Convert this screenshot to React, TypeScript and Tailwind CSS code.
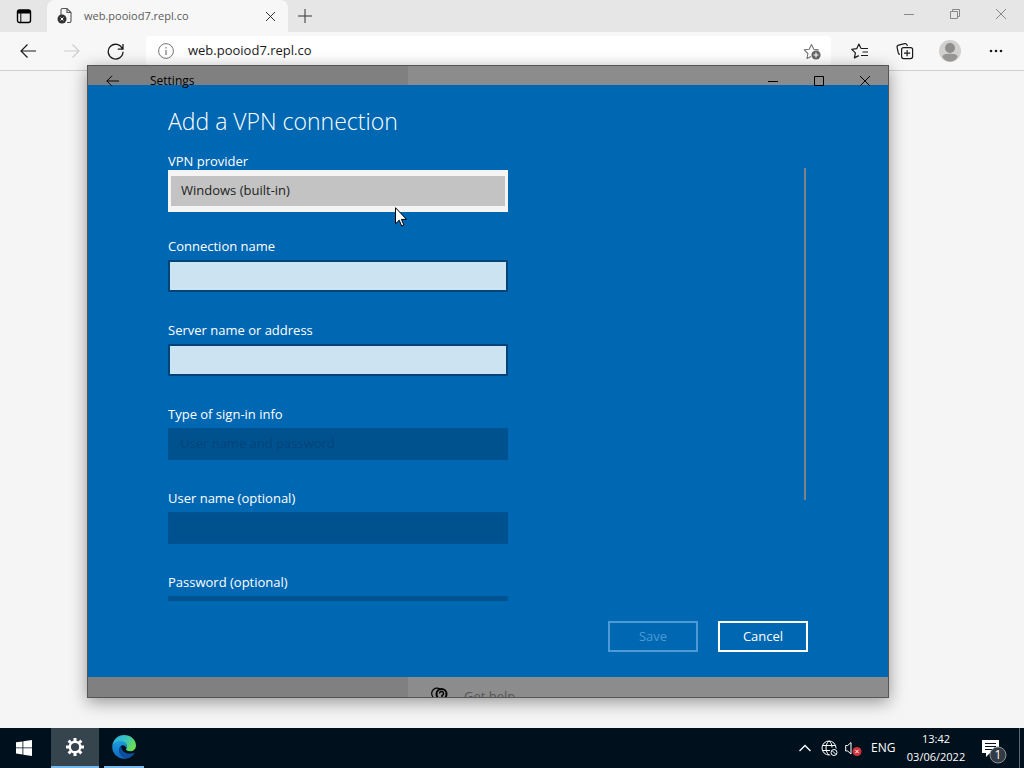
import { useState } from "react";

const edgeIcon = "fill-none stroke-current";

function CloseIcon({ className }: { className: string }) {
	return (
		<svg viewBox="0 0 10 10" className={className} fill="none" stroke="currentColor">
			<path d="M0 0L10 10M10 0L0 10" />
		</svg>
	);
}

function BackIcon({ className }: { className: string }) {
	return (
		<svg viewBox="0 0 16 14" className={className} fill="none" stroke="currentColor" strokeWidth="1.2">
			<path d="M16 7H1M7.5 .5L1 7l6.5 6.5" />
		</svg>
	);
}

function TabStrip() {
	return (
		<div className="flex h-8 bg-[#e6e6e6] text-[#1b1b1b]">
			<button type="button" aria-label="Tab actions" className="flex w-[47px] items-center justify-center">
				<svg viewBox="0 0 16 16" className="h-4 w-4">
					<rect x="1.5" y="2" width="13" height="12.5" rx="2" fill="none" stroke="#000" strokeWidth="1.4" />
					<path d="M1.5 5.5V4a2 2 0 0 1 2-2h9a2 2 0 0 1 2 2v1.5z" fill="#000" />
					<path d="M4.8 5v9" stroke="#000" strokeWidth="1" />
				</svg>
			</button>
			<div className="flex w-[241px] items-center rounded-t-lg bg-[#f7f7f7] pl-[10px] pr-[9px]">
				<svg viewBox="0 0 16 18" className="h-[18px] w-4">
					<path
						d="M4 8V3a1.500 1.500 0 0 1 1.500-1.500H10L14 5.500V14a1.500 1.500 0 0 1-1.500 1.500H10M10 1.500v4h4"
						fill="none"
						stroke="#555"
						strokeWidth="1.1"
					/>
					<circle cx="5" cy="12" r="4.5" fill="#333" />
					<path d="M3.5 10.500l3 3m0-3l-3 3" stroke="#fff" strokeWidth="1" />
				</svg>
				<span className="ml-[11px] flex-1 text-[11px] text-[#5a5a5a]">web.pooiod7.repl.co</span>
				<button type="button" aria-label="Close tab" className="p-1">
					<CloseIcon className="h-[9px] w-[9px]" />
				</button>
			</div>
			<button type="button" aria-label="New tab" className="flex w-[34px] items-center justify-center">
				<svg viewBox="0 0 14 14" className="h-[14px] w-[14px] fill-none stroke-[#333]">
					<path d="M7 0v14M0 7h14" />
				</svg>
			</button>
			<div className="ml-auto flex items-center pb-1 text-[#888]">
				<button type="button" aria-label="Minimize" className="flex w-[46px] justify-center">
					<svg viewBox="0 0 10 10" className="h-[10px] w-[10px] fill-none stroke-current">
						<path d="M0 5.500h10" />
					</svg>
				</button>
				<button type="button" aria-label="Restore" className="flex w-[46px] justify-center">
					<svg viewBox="0 0 10 10" className="h-[10px] w-[10px] fill-none stroke-current">
						<path d="M.5 2.500h7v7h-7zM2.500 2.500v-2h7v7h-2" />
					</svg>
				</button>
				<button type="button" aria-label="Close" className="flex w-[46px] justify-center">
					<CloseIcon className="h-[10px] w-[10px]" />
				</button>
			</div>
		</div>
	);
}

function Toolbar() {
	const [url, setUrl] = useState("web.pooiod7.repl.co");

	return (
		<div className="flex h-[39px] items-center border-b border-[#d0d0d0] bg-[#f7f7f7] pl-5 pr-[21px] text-[#1b1b1b]">
			<button type="button" aria-label="Back">
				<BackIcon className="h-[14px] w-4" />
			</button>
			<button type="button" aria-label="Forward" disabled className="ml-7 text-[#cdcdcd]">
				<BackIcon className="h-[14px] w-4 rotate-180" />
			</button>
			<button type="button" aria-label="Refresh" className="ml-[27px]">
				<svg viewBox="0 0 17 17" className={`h-[17px] w-[17px] ${edgeIcon}`} strokeWidth="1.3">
					<path d="M15.500 6A7.400 7.400 0 1 0 16 8.800M16 1v5.200h-5.200" />
				</svg>
			</button>
			<div className="ml-[22px] flex h-[30px] flex-1 items-center rounded bg-white pl-3 pr-[9px]">
				<svg viewBox="0 0 16 16" className="h-4 w-4 fill-none stroke-[#767676]">
					<circle cx="8" cy="8" r="7.4" />
					<path d="M8 7v5M8 4v1.500" strokeWidth="1.2" />
				</svg>
				<input
					type="text"
					aria-label="Address"
					value={url}
					onChange={(e) => setUrl(e.target.value)}
					className="ml-[14px] min-w-0 flex-1 text-[13px] outline-none"
				/>
				<button type="button" aria-label="Add to favorites" className="text-[#767676]">
					<svg viewBox="0 0 19 18" className={`h-[18px] w-[19px] ${edgeIcon}`} strokeWidth="1.1">
						<path d="M8 14.500L4 16.500l.9-5L1.200 7.900l5-.7L8.500 2.500l2.300 4.700 5 .7" strokeLinejoin="round" />
						<circle cx="13" cy="13" r="4.6" fill="#666" stroke="none" />
						<path d="M13 10.500v5M10.500 13h5" stroke="#fff" />
					</svg>
				</button>
			</div>
			<button type="button" aria-label="Favorites" className="ml-5">
				<svg viewBox="0 0 18 18" className={`h-[18px] w-[18px] ${edgeIcon}`} strokeWidth="1.2">
					<path
						d="M10 6.500L7.900 2 5.700 6.700l-5 .7 3.700 3.500-1 5 4.400-2.300M10 6.500h7M11.500 10H17M10 13.500h7"
						strokeLinejoin="round"
					/>
				</svg>
			</button>
			<button type="button" aria-label="Collections" className="ml-[27px]">
				<svg viewBox="0 0 18 18" className={`h-[18px] w-[18px] ${edgeIcon}`} strokeWidth="1.2">
					<path d="M4 12.500a2 2 0 0 1-1.700-1.500L1.100 5.500a2 2 0 0 1 1.500-2.300l6.200-1.500a2 2 0 0 1 2.400 1.500l.2.8" />
					<rect x="5.6" y="5.6" width="11" height="11" rx="2" />
					<path d="M11.100 8v6.200M8 11.100h6.200" />
				</svg>
			</button>
			<button type="button" aria-label="Profile" className="ml-[25px]">
				<svg viewBox="0 0 22 22" className="h-[22px] w-[22px]">
					<circle cx="11" cy="11" r="11" fill="#d2d0ce" />
					<circle cx="11" cy="8" r="5" fill="#8f8d8b" />
					<path d="M3.500 17c0-2.500 3-3.200 7.500-3.200s7.500.7 7.500 3.200c-1.500 2.800-4 4.500-7.500 4.500s-6-1.700-7.500-4.500z" fill="#979593" />
				</svg>
			</button>
			<button type="button" aria-label="Settings and more" className="ml-7">
				<svg viewBox="0 0 14 4" className="h-1 w-[14px] fill-current">
					<circle cx="2" cy="2" r="1.3" />
					<circle cx="7" cy="2" r="1.3" />
					<circle cx="12" cy="2" r="1.3" />
				</svg>
			</button>
		</div>
	);
}

type TextRowProps = {
	id: string;
	label: string;
	type?: string;
	disabled?: boolean;
};

function TextRow({ id, label, type = "text", disabled = false }: TextRowProps) {
	return (
		<div className="flex h-[84px] shrink-0 flex-col gap-1">
			<label htmlFor={id} className="text-[13px] leading-5">
				{label}
			</label>
			<input
				id={id}
				type={type}
				disabled={disabled}
				className="h-8 border-2 border-[#004578] bg-[#cce3f1] px-2 text-black outline-none disabled:border-[#005291] disabled:bg-[#00528f]"
			/>
		</div>
	);
}

function VpnDialog() {
	return (
		<div
			role="dialog"
			aria-label="Add a VPN connection"
			className="absolute inset-x-0 top-[19px] bottom-5 flex flex-col bg-[#0067b3] px-20 pt-5 pb-[25px] text-white"
		>
			<h1 className="mb-[15px] text-[23px] leading-8 font-light">Add a VPN connection</h1>
			<div className="flex min-h-0 flex-1 justify-between overflow-hidden pr-[2px]">
				<form className="flex w-[340px] flex-col">
					<div className="flex h-[84px] shrink-0 flex-col">
						<label htmlFor="provider" className="text-[13px] leading-[18px]">
							VPN provider
						</label>
						<select
							id="provider"
							className="h-[42px] appearance-none border-x-[3px] border-y-[6px] border-[#f4f4f4] bg-[#c3c3c3] px-[10px] text-[13px] text-[#222] outline-none"
						>
							<option>Windows (built-in)</option>
						</select>
					</div>
					<TextRow id="connection" label="Connection name" />
					<TextRow id="server" label="Server name or address" />
					<div className="flex h-[84px] shrink-0 flex-col gap-1">
						<label htmlFor="signin" className="text-[13px] leading-5">
							Type of sign-in info
						</label>
						<select
							id="signin"
							disabled
							className="h-8 appearance-none bg-[#00528f] px-3 text-[13px] text-[#00447b] opacity-100"
						>
							<option>User name and password</option>
						</select>
					</div>
					<TextRow id="user" label="User name (optional)" disabled />
					<TextRow id="password" label="Password (optional)" type="password" disabled />
				</form>
				<div className="mt-4 h-[332px] w-[2px] bg-[#7a8289]" />
			</div>
			<div className="mt-5 flex justify-end gap-5 text-[13px]">
				<button type="button" disabled className="h-[31px] w-[90px] border-2 border-[#4d9bd6] text-[#4d9bd6]">
					Save
				</button>
				<button type="button" className="h-[31px] w-[90px] border-2 border-white">
					Cancel
				</button>
			</div>
		</div>
	);
}

function SettingsWindow() {
	return (
		<div className="absolute top-[65px] right-[135px] bottom-[30px] left-[87px] overflow-hidden border border-[#555] bg-[#8c8c8c] shadow-[0_4px_16px_rgba(0,0,0,0.4)]">
			<div className="flex h-full">
				<div className="w-80 bg-[#808080]" />
				<div className="flex flex-1 items-end pl-[22px]">
					<div className="flex h-4 items-start gap-4 overflow-hidden text-[#555]">
						<svg viewBox="0 0 18 18" className="mt-1 h-[18px] w-[18px] fill-none stroke-black">
							<path d="M3 12a5 5 0 1 1 8-7" strokeWidth="1.2" />
							<circle cx="11.5" cy="9" r="5" strokeWidth="2" />
							<path d="M9.500 8.500a2 2 0 1 1 2.500 2v1.500" strokeWidth="1.5" />
						</svg>
						<span className="mt-[5px] text-[13px] leading-5">Get help</span>
					</div>
				</div>
			</div>
			<VpnDialog />
			{/* title bar stays above the dialog */}
			<div className="absolute inset-x-0 top-0 flex h-[30px] items-center text-black">
				<button type="button" aria-label="Go back" className="flex w-12 items-center justify-center">
					<BackIcon className="h-3 w-[13px]" />
				</button>
				<span className="ml-[14px] text-[12px]">Settings</span>
				<button type="button" aria-label="Minimize window" className="ml-auto flex w-[46px] justify-center">
					<svg viewBox="0 0 10 10" className="h-[10px] w-[10px] fill-none stroke-current">
						<path d="M0 5.500h10" />
					</svg>
				</button>
				<button type="button" aria-label="Maximize window" className="flex w-[46px] justify-center">
					<svg viewBox="0 0 10 10" className="h-[10px] w-[10px] fill-none stroke-current">
						<path d="M.5 .5h9v9h-9z" />
					</svg>
				</button>
				<button type="button" aria-label="Close window" className="flex w-[46px] justify-center">
					<CloseIcon className="h-[10px] w-[10px]" />
				</button>
			</div>
		</div>
	);
}

function EdgeLogo() {
	return (
		<svg viewBox="0 0 24 24" className="h-6 w-6">
			<defs>
				<linearGradient id="edge-top" x1="0" y1="0" x2="1" y2=".5">
					<stop offset="0" stopColor="#2aa8e0" />
					<stop offset=".5" stopColor="#35c1c8" />
					<stop offset="1" stopColor="#6bdc54" />
				</linearGradient>
				<linearGradient id="edge-left" x1="0" y1="0" x2="0" y2="1">
					<stop offset="0" stopColor="#1b9de2" />
					<stop offset="1" stopColor="#1164b8" />
				</linearGradient>
			</defs>
			<path
				d="M.3 11C1 4.500 6 0 12 0c7 0 12 5 12 10.500 0 3.800-2.800 5.800-6 5.800-2.700 0-4-1-4-1.700 0-.8 1-1.200 1-3.100 0-2.600-2.600-4.500-6-4.500-3.900 0-7 1.500-8.700 4z"
				fill="url(#edge-top)"
			/>
			<path
				d="M.2 12C.6 8.500 4 6 8.500 6c4 0 6.500 2.400 6.500 5.300 0 .8-.2 1.400-.5 1.900C13.600 11 12 10 10.500 10.300 7 11 6.500 16 9 19.500c1.500 2 3.800 3.500 6 4A12 12 0 0 1 .2 12z"
				fill="url(#edge-left)"
			/>
			<path
				d="M9.300 11C6 13 6.500 18 9.500 21c2 2 4.500 2.700 6 2.400 3-.8 5.500-2.800 6.900-5.200.2-.4-.2-.7-.6-.5-1.300.6-2.600.9-4 .9-5 0-9-3.200-8.500-7.600z"
				fill="#0d4f9e"
			/>
		</svg>
	);
}

function Taskbar() {
	return (
		<div className="flex h-10 shrink-0 bg-[#00101c] text-[12px] text-white">
			<button type="button" aria-label="Start" className="flex w-[51px] items-center justify-center pr-[3px]">
				<svg viewBox="0 0 16 16" className="h-4 w-4 fill-white">
					<path d="M0 2.300L6.500 1.400v6.100H0zM7.300 1.300L16 0v7.500H7.300zM0 8.300h6.500v6.200L0 13.600zM7.300 8.300H16V16l-8.700-1.300z" />
				</svg>
			</button>
			<button
				type="button"
				aria-label="Settings"
				className="flex w-12 items-center justify-center border-b-2 border-[#76b9ed] bg-[#36444e]"
			>
				<svg viewBox="0 0 20 20" className="h-5 w-5 fill-none stroke-white">
					<circle cx="10" cy="10" r="5.3" strokeWidth="2.4" />
					<path
						d="M10 1v3M10 16v3M1 10h3M16 10h3M3.600 3.600l2.200 2.200M14.200 14.200l2.200 2.200M3.600 16.400l2.200-2.200M14.200 5.800l2.200-2.200"
						strokeWidth="3"
					/>
				</svg>
			</button>
			<button
				type="button"
				aria-label="Microsoft Edge"
				className="ml-[5px] flex w-10 items-center justify-center border-b-2 border-[#76b9ed]"
			>
				<EdgeLogo />
			</button>
			<div className="ml-auto flex items-center">
				<button type="button" aria-label="Show hidden icons">
					<svg viewBox="0 0 12 8" className="h-2 w-3 fill-none stroke-white">
						<path d="M.5 7L6 1.500 11.500 7" strokeWidth="1.3" />
					</svg>
				</button>
				<button type="button" aria-label="No internet access" className="ml-[10px]">
					<svg viewBox="0 0 17 17" className="h-[17px] w-[17px] fill-none stroke-white">
						<circle cx="8" cy="8" r="7" />
						<path d="M8 1C4 4 4 12 8 15M8 1c2 1.500 3 3.500 3 6.500M1.500 5.500h13M1.500 10.500H9" />
						<circle cx="13" cy="12.5" r="4.5" fill="#00101c" stroke="none" />
						<circle cx="13" cy="12.5" r="3" />
						<path d="M11 10.500l4 4" />
					</svg>
				</button>
				<button type="button" aria-label="Sound muted" className="ml-[7px]">
					<svg viewBox="0 0 17 17" className="h-[17px] w-[17px] fill-none stroke-white">
						<path d="M.7 5.500h2L6 2.500v11.500L2.700 11h-2z" />
						<circle cx="12" cy="11.5" r="4.5" fill="#d3303b" stroke="none" />
						<path d="M10.300 9.800l3.400 3.400m0-3.400l-3.400 3.400" />
					</svg>
				</button>
				<span className="ml-[9px] w-6">ENG</span>
				<div className="ml-[11px] w-[60px] text-center text-[11px] leading-[18px] whitespace-nowrap">
					<div>13:42</div>
					<div>03/06/2022</div>
				</div>
				<button type="button" aria-label="1 new notification" className="ml-[15px] mr-3">
					<svg viewBox="0 0 26 32" className="h-8 w-[26px]">
						<path d="M1 8h17v13H9l-4 4v-4H1z" fill="#fff" />
						<path d="M4 11.500h11M4 14.500h11M4 17.500h7" stroke="#00101c" />
						<circle cx="17" cy="23" r="8" fill="#333c44" stroke="#8b9197" />
						<text x="17" y="27" textAnchor="middle" fontSize="12" fill="#fff">
							1
						</text>
					</svg>
				</button>
				<div className="h-10 w-[5px] border-l border-[#5b646c]" />
			</div>
		</div>
	);
}

export default function App() {
	return (
		<div className="relative flex h-screen flex-col overflow-hidden bg-[#f5f5f5] font-['Open_Sans','Noto_Sans',sans-serif]">
			<main className="relative min-h-0 flex-1">
				<TabStrip />
				<Toolbar />
				<SettingsWindow />
			</main>
			<Taskbar />
			{/* mouse pointer */}
			<svg viewBox="0 0 12 20" className="absolute top-[207px] left-[395px] h-5 w-3">
				<path d="M.5 .7v16.100l3.700-3.600 2.500 5.800 2.200-1-2.500-5.600h5.100z" fill="#fff" stroke="#000" />
			</svg>
		</div>
	);
}
